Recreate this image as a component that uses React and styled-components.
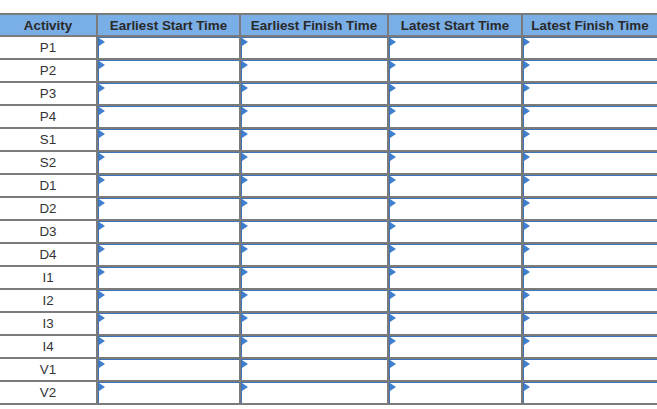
import React from 'react'
import styled, { createGlobalStyle } from 'styled-components'

const Global = createGlobalStyle`
  html, body { margin: 0; padding: 0; background: #fff; }
  body { font-family: "Liberation Sans", Arial, sans-serif; overflow: hidden; }
`

const Page = styled.div`
  padding-top: 13px;
  width: 680px;
`

const Table = styled.table`
  border-collapse: collapse;
  table-layout: fixed;
  width: 658px;
`

const HeadCell = styled.th`
  height: 20px;
  padding: 0;
  background: #79aee6;
  border: 2px solid #7b7b7b;
  border-width: 2px 2px 2px 0;
  color: #2a2a2a;
  font-size: 13.4px;
  font-weight: bold;
  text-align: center;
  white-space: nowrap;
`

const NameCell = styled.td`
  height: 21px;
  padding: 0;
  border: 2px solid #7b7b7b;
  border-width: 0 2px 2px 0;
  color: #333;
  font-size: 13.4px;
  text-align: center;
`

const InputCell = styled.td`
  height: 21px;
  padding: 0;
  border: 2px solid #7b7b7b;
  border-width: 0 2px 2px 0;
`

const Field = styled.div`
  box-sizing: border-box;
  height: 21px;
  border: 1px solid #3f74b8;
  border-bottom: none;
  border-right: none;
  position: relative;
`

const Marker = styled.span`
  position: absolute;
  top: 0;
  left: 0;
  width: 0;
  height: 0;
  border-top: 4px solid transparent;
  border-bottom: 4px solid transparent;
  border-left: 6px solid #3f7fd0;
`

const widths = [97, 143, 148, 134, 136]
const headers = ['Activity', 'Earliest Start Time', 'Earliest Finish Time', 'Latest Start Time', 'Latest Finish Time']
const activities = ['P1', 'P2', 'P3', 'P4', 'S1', 'S2', 'D1', 'D2', 'D3', 'D4', 'I1', 'I2', 'I3', 'I4', 'V1', 'V2']

export default function App() {
  return (
    <Page>
      <Global />
      <Table>
        <colgroup>
          {widths.map((w, i) => <col key={i} style={{ width: w }} />)}
        </colgroup>
        <thead>
          <tr>
            {headers.map(h => <HeadCell key={h}>{h}</HeadCell>)}
          </tr>
        </thead>
        <tbody>
          {activities.map(a => (
            <tr key={a}>
              <NameCell>{a}</NameCell>
              {[0, 1, 2, 3].map(i => (
                <InputCell key={i}>
                  <Field><Marker /></Field>
                </InputCell>
              ))}
            </tr>
          ))}
        </tbody>
      </Table>
    </Page>
  )
}
